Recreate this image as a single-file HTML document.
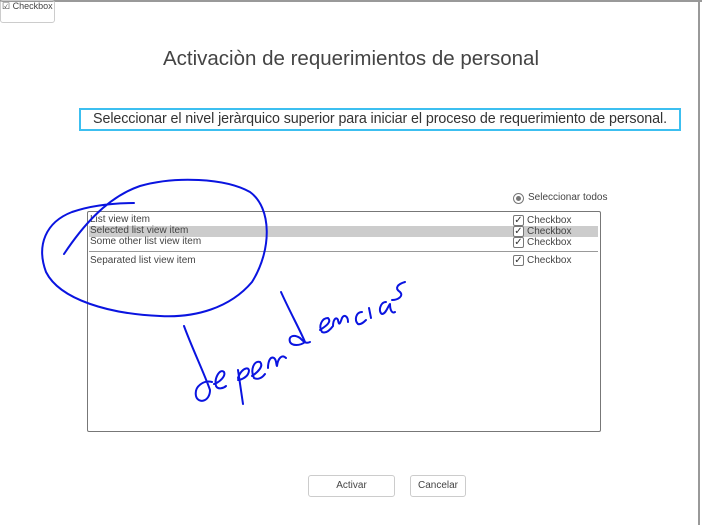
<!DOCTYPE html>
<html><head><meta charset="utf-8"><style>
body{margin:0;width:702px;height:525px;background:#fff;position:relative;overflow:hidden;font-family:"Liberation Sans",sans-serif;color:#444}
.a{position:absolute;white-space:nowrap}
.cb{position:absolute;width:9px;height:9px;border:1px solid #777;border-radius:2px;background:#fff;font-size:10px;line-height:9px;text-align:center;color:#333}
</style></head><body>
<div class="a" style="left:0;top:0;width:702px;height:2px;background:#999"></div>
<div class="a" style="left:698px;top:0;width:2px;height:525px;background:#999"></div>
<div class="a" style="left:0;top:0;width:53px;height:21px;border:1px solid #ccc;border-radius:3px"></div>
<div class="a" style="left:2px;top:1px;font-size:9px;color:#444">☑ Checkbox</div>
<div class="a" style="left:0;top:47px;width:702px;text-align:center;font-size:20.5px;color:#444">Activaciòn de requerimientos de personal</div>
<div class="a" style="left:79px;top:108px;width:598px;height:19px;border:2px solid #3cbff0;font-size:14.3px;line-height:19px;text-align:center;color:#333;letter-spacing:-0.1px">Seleccionar el nivel jeràrquico superior para iniciar el proceso de requerimiento de personal.</div>
<div class="a" style="left:513px;top:193px;width:9px;height:9px;border:1px solid #777;border-radius:50%"><div style="margin:2px;width:5px;height:5px;border-radius:50%;background:#777"></div></div>
<div class="a" style="left:528px;top:192px;font-size:10px">Seleccionar todos</div>
<div class="a" style="left:87px;top:211px;width:512px;height:219px;border:1px solid #777;border-radius:2px"></div>
<div class="a" style="left:89px;top:226px;width:509px;height:11px;background:#ccc"></div>
<div class="a" style="left:89px;top:251px;width:509px;height:1px;background:#999"></div>
<div class="a" style="left:90px;top:214px;font-size:10px;line-height:11px">List view item<br>Selected list view item<br>Some other list view item</div>
<div class="a" style="left:90px;top:255px;font-size:10px">Separated list view item</div>
<div class="cb" style="left:513px;top:215px">✓</div><div class="a" style="left:527px;top:215px;font-size:10px">Checkbox</div>
<div class="cb" style="left:513px;top:226px">✓</div><div class="a" style="left:527px;top:226px;font-size:10px">Checkbox</div>
<div class="cb" style="left:513px;top:237px">✓</div><div class="a" style="left:527px;top:237px;font-size:10px">Checkbox</div>
<div class="cb" style="left:513px;top:255px">✓</div><div class="a" style="left:527px;top:255px;font-size:10px">Checkbox</div>
<div class="a" style="left:308px;top:475px;width:85px;height:20px;border:1px solid #ccc;border-radius:3px;font-size:10px;line-height:20px;text-align:center">Activar</div>
<div class="a" style="left:410px;top:475px;width:54px;height:20px;border:1px solid #ccc;border-radius:3px;font-size:10px;line-height:20px;text-align:center">Cancelar</div>
<svg class="a" style="left:0;top:0" width="702" height="525" fill="none" stroke="#0a14e0" stroke-width="2" stroke-linecap="round" stroke-linejoin="round">
<path d="M64 254 C80 230 105 198 140 186 C175 176 225 178 250 192 C272 208 272 250 252 282 C230 308 195 318 160 316 C110 314 60 300 46 272 C36 245 46 222 72 212 C95 204 120 203 134 203"/>
<path d="M184 326 C192 348 205 375 210 390 C210 402 198 404 196 396 C194 386 204 380 212 382"/>
<path d="M214 384 C220 382 226 376 224 372 C220 368 214 378 216 386 C218 390 224 388 226 386"/>
<path d="M238 370 L243 404 M238 378 C242 366 252 366 248 374 C246 378 240 380 238 380"/>
<path d="M252 376 C258 372 264 366 260 362 C254 360 250 370 254 378 C258 380 262 378 265 374"/>
<path d="M268 368 C268 362 270 356 274 358 C277 360 276 366 277 366 C278 358 282 354 286 358"/>
<path d="M281 292 C290 312 300 330 305 342 C300 346 292 346 290 342 C288 336 294 334 300 338 C304 342 306 344 310 342"/>
<path d="M320 330 C326 326 332 322 328 318 C322 318 318 326 322 332 C326 334 330 330 333 326 C333 320 336 316 338 320 C339 326 340 324 342 318 C344 314 348 316 348 322"/>
<path d="M362 312 C356 312 354 320 358 324 C361 325 364 322 366 320 M369 308 L371 318"/>
<path d="M386 302 C380 302 378 312 382 314 C386 314 388 306 390 304 C390 310 392 314 395 312"/>
<path d="M405 282 C398 284 394 288 400 292 C404 296 398 300 392 300"/>
</svg>
</body></html>
